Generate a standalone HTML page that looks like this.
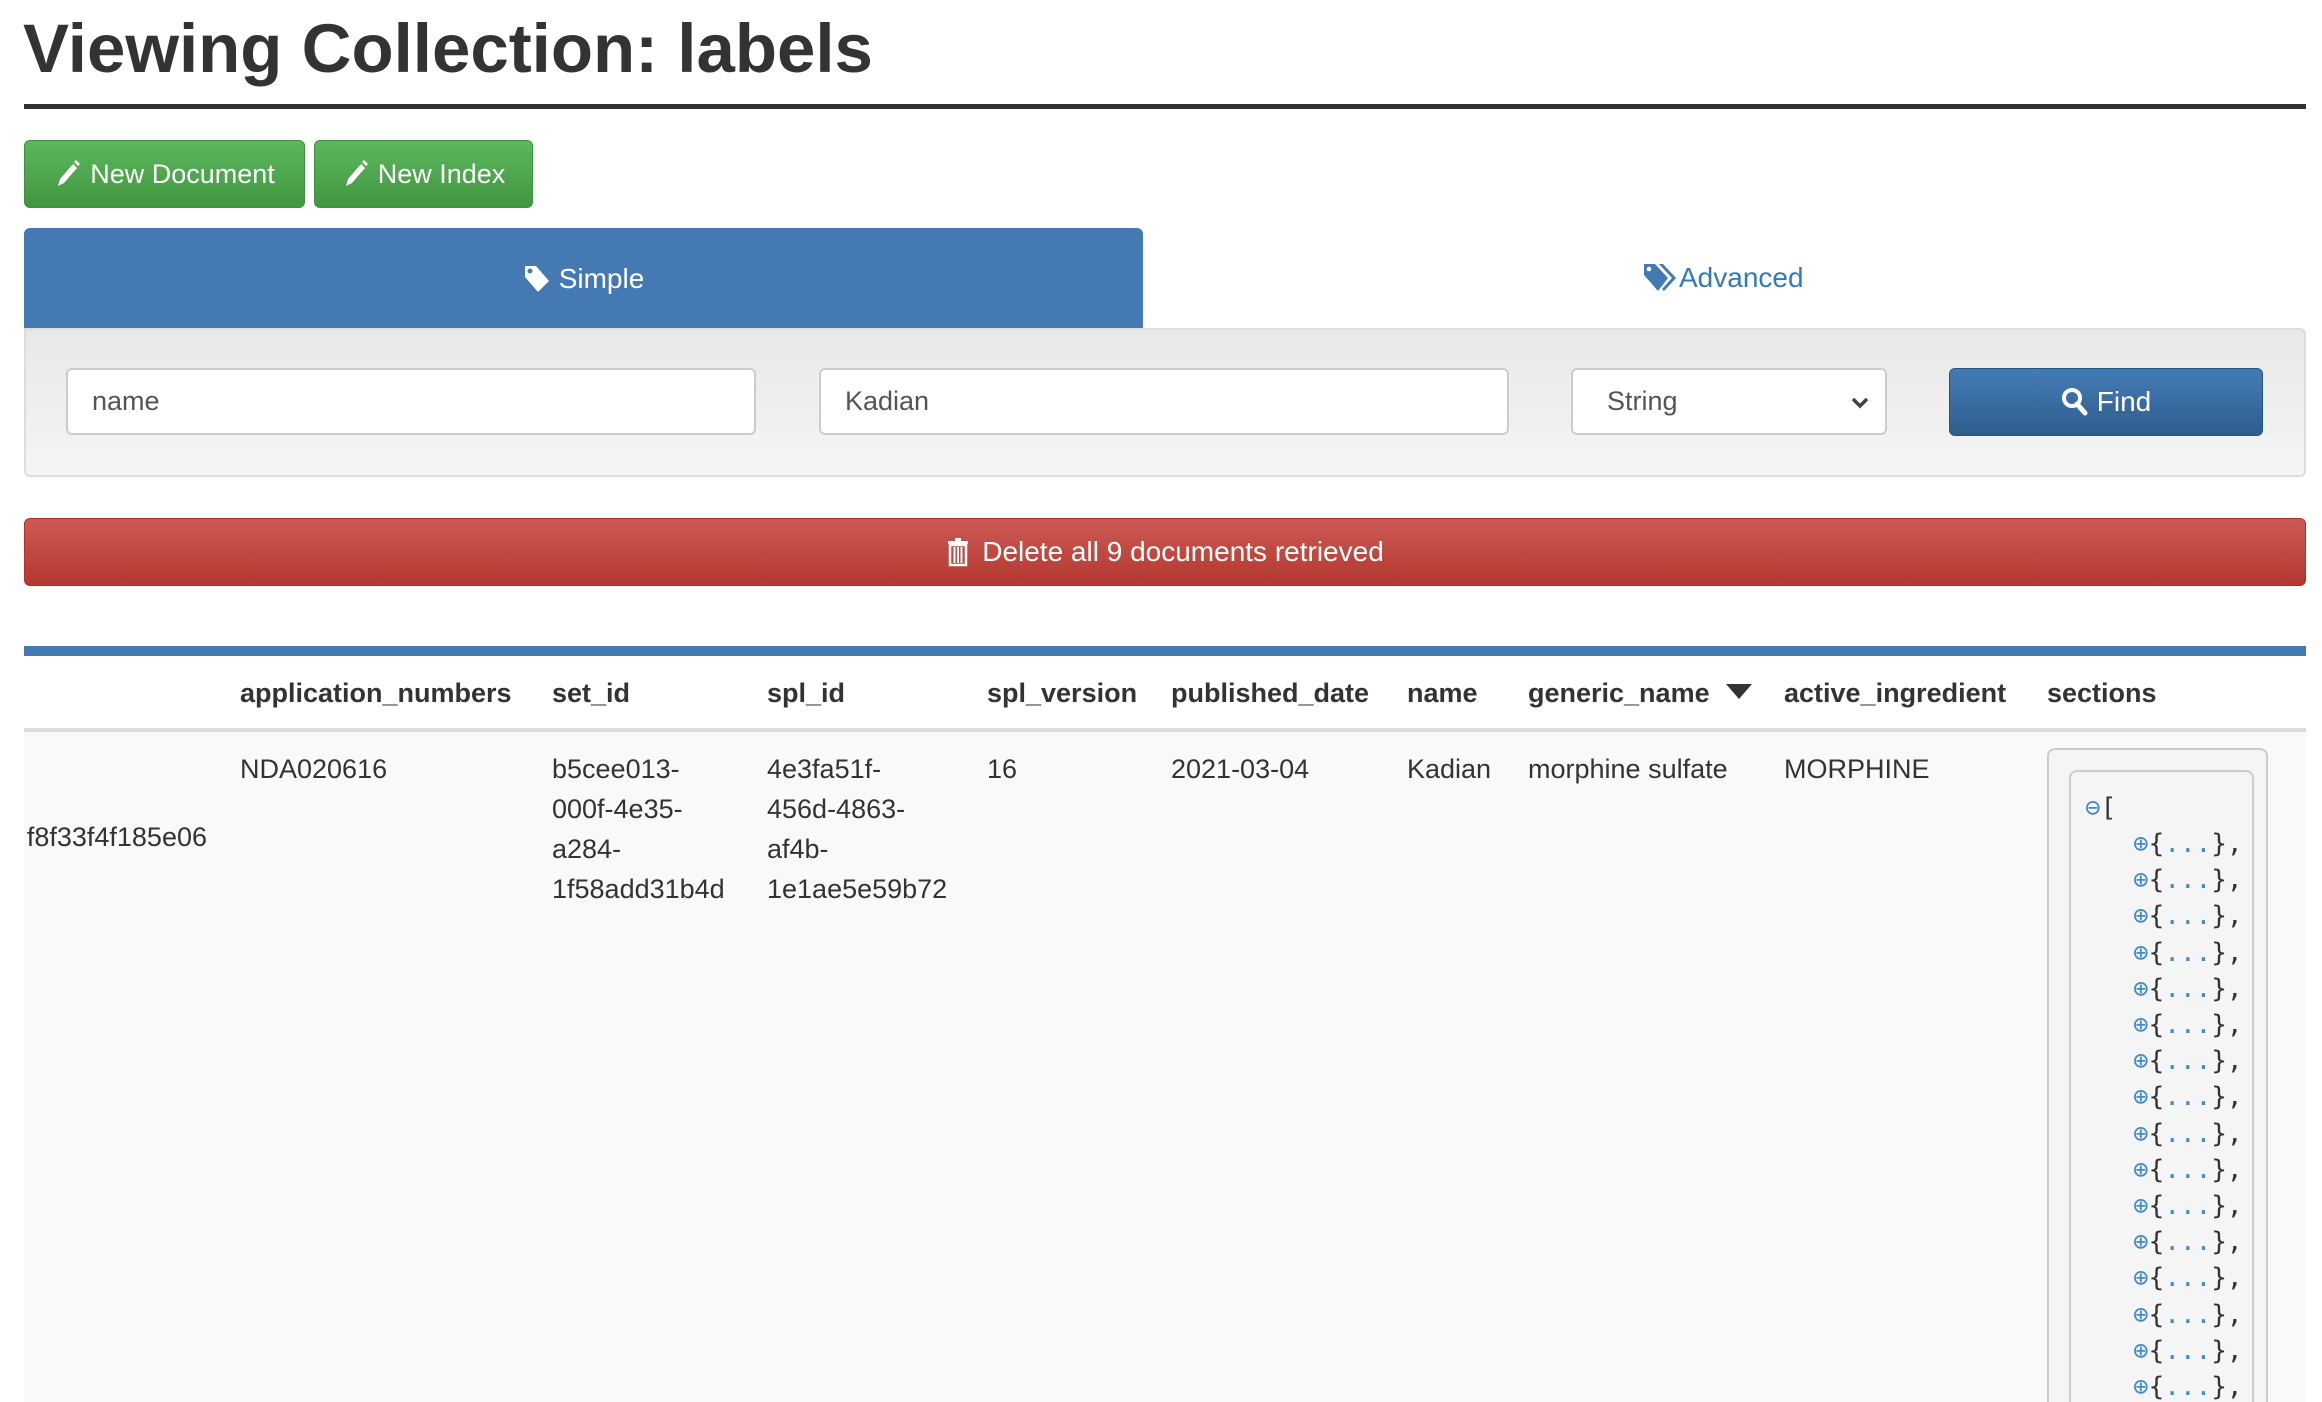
<!DOCTYPE html>
<html style="overflow:hidden;height:1402px"><head><meta charset="utf-8"><style>
*{box-sizing:border-box;margin:0;padding:0}
body{width:2322px;height:1402px;overflow:hidden;background:#fff;font-family:"Liberation Sans",Arial,sans-serif;color:#333;position:relative}
.a{position:absolute}
.t{position:absolute;white-space:nowrap;font-size:27px;line-height:40px}
.btn{position:absolute;border-radius:6px;color:#fff;font-size:27px;display:flex;align-items:center;justify-content:center}
.inp{position:absolute;background:#fff;border:2px solid #ccc;border-radius:6px;font-size:27px;color:#555;display:flex;align-items:center;padding-left:24px}
.h{font-weight:bold}
.mono{font-family:"DejaVu Sans Mono","Liberation Mono",monospace;font-size:26px;line-height:36.2px;position:absolute;white-space:pre;color:#333}
.b{color:#428bca}
</style></head><body>
<div class="a" style="left:23px;top:13px;font-size:69px;line-height:71px;font-weight:bold;white-space:nowrap;color:#333">Viewing Collection: labels</div>
<div class="a" style="left:24px;top:104px;width:2282px;height:5px;background:#333"></div>

<div class="btn" style="left:24px;top:140px;width:281px;height:68px;background:linear-gradient(#5cb85c,#419641);border:1px solid #3e8f3e">
<svg width="26" height="28" viewBox="0 0 26 28" style="margin-right:10px"><path d="M4 26 L6 19 L19 4 L23 8 L10 23 Z" fill="#fff"/><path d="M20 2 L22 0 L26 4 L24 6Z" fill="#fff"/></svg>New Document</div>
<div class="btn" style="left:314px;top:140px;width:219px;height:68px;background:linear-gradient(#5cb85c,#419641);border:1px solid #3e8f3e">
<svg width="26" height="28" viewBox="0 0 26 28" style="margin-right:10px"><path d="M4 26 L6 19 L19 4 L23 8 L10 23 Z" fill="#fff"/><path d="M20 2 L22 0 L26 4 L24 6Z" fill="#fff"/></svg>New Index</div>

<div class="btn" style="left:24px;top:228px;width:1119px;height:101px;background:#4479b3;border-radius:6px 6px 0 0;font-size:28px">
<svg width="28" height="30" viewBox="0 0 28 30" style="margin-right:8px"><path d="M2 2 L13 2 L26 17 L15 28 L2 13 Z" fill="#fff"/><circle cx="7" cy="7" r="2.5" fill="#4479b3"/></svg>Simple</div>
<div class="a" style="left:1643px;top:258px;height:40px;display:flex;align-items:center;color:#337ab7;font-size:28px">
<svg width="36" height="30" viewBox="0 0 36 30"><path d="M1 1 L12 1 L25 15 L15 28 L1 12 Z" fill="#4479b3"/><path d="M16 1 L20 1 L33 15 L21 28 L19 26 L29 15 Z" fill="#4479b3"/><circle cx="6" cy="6" r="2.3" fill="#fff"/></svg>Advanced</div>

<div class="a" style="left:24px;top:328px;width:2282px;height:149px;background:linear-gradient(#e8e8e8,#f5f5f5);border:2px solid #ddd;border-radius:0 6px 6px 6px"></div>
<div class="inp" style="left:66px;top:368px;width:690px;height:67px">name</div>
<div class="inp" style="left:819px;top:368px;width:690px;height:67px">Kadian</div>
<div class="inp" style="left:1571px;top:368px;width:316px;height:67px;padding-left:34px">String
<svg class="a" style="right:16px;top:26px" width="18" height="14" viewBox="0 0 18 14"><path d="M2 3 L9 10 L16 3" stroke="#444" stroke-width="3.5" fill="none"/></svg></div>
<div class="btn" style="left:1949px;top:368px;width:314px;height:68px;background:linear-gradient(#447bb5,#2f5d8e);border:1px solid #245580;font-size:28px">
<svg width="28" height="30" viewBox="0 0 28 30" style="margin-right:8px"><circle cx="11" cy="11" r="8" stroke="#fff" stroke-width="4" fill="none"/><path d="M16 17 L24 26" stroke="#fff" stroke-width="5" stroke-linecap="round"/></svg>Find</div>

<div class="btn" style="left:24px;top:518px;width:2282px;height:68px;background:linear-gradient(#cc5a55,#b3382f);border:1px solid #b92c28;font-size:28px">
<svg width="24" height="30" viewBox="0 0 24 30" style="margin-right:12px"><path d="M9 1 H15 V4 H9Z M2 4 H22 V7 H2Z" fill="#fff"/><path d="M4 8 H20 V28 H4 Z" fill="none" stroke="#fff" stroke-width="2.5"/><path d="M8.5 10 V26 M12 10 V26 M15.5 10 V26" stroke="#fff" stroke-width="2"/></svg>Delete all 9 documents retrieved</div>

<div class="a" style="left:24px;top:646px;width:2282px;height:10px;background:#4479b3"></div>
<div class="a" style="left:24px;top:728px;width:2282px;height:4px;background:#ddd"></div>
<div class="a" style="left:24px;top:732px;width:2282px;height:670px;background:#f9f9f9"></div>

<div class="t h" style="left:240px;top:673px">application_numbers</div>
<div class="t h" style="left:552px;top:673px">set_id</div>
<div class="t h" style="left:767px;top:673px">spl_id</div>
<div class="t h" style="left:987px;top:673px">spl_version</div>
<div class="t h" style="left:1171px;top:673px">published_date</div>
<div class="t h" style="left:1407px;top:673px">name</div>
<div class="t h" style="left:1528px;top:673px">generic_name</div>
<svg class="a" style="left:1726px;top:684px" width="26" height="16" viewBox="0 0 26 16"><path d="M0 0 H26 L13 15Z" fill="#333"/></svg>
<div class="t h" style="left:1784px;top:673px">active_ingredient</div>
<div class="t h" style="left:2047px;top:673px">sections</div>

<div class="a" style="left:24px;top:817px;width:200px;height:40px;overflow:hidden"><div class="t" style="right:17px;top:0">f8f33f4f185e06</div></div>
<div class="t" style="left:240px;top:749px">NDA020616</div>
<div class="t" style="left:552px;top:749px">b5cee013-<br>000f-4e35-<br>a284-<br>1f58add31b4d</div>
<div class="t" style="left:767px;top:749px">4e3fa51f-<br>456d-4863-<br>af4b-<br>1e1ae5e59b72</div>
<div class="t" style="left:987px;top:749px">16</div>
<div class="t" style="left:1171px;top:749px">2021-03-04</div>
<div class="t" style="left:1407px;top:749px">Kadian</div>
<div class="t" style="left:1528px;top:749px">morphine sulfate</div>
<div class="t" style="left:1784px;top:749px">MORPHINE</div>

<div class="a" style="left:2047px;top:748px;width:221px;height:654px;background:#f5f5f5;border:2px solid #ccc;border-bottom:none;border-radius:8px 8px 0 0"></div>
<div class="a" style="left:2069px;top:770px;width:185px;height:632px;background:#f5f5f5;border:2px solid #ccc;border-bottom:none;border-radius:8px 8px 0 0"></div>
<div class="mono" style="left:2085px;top:790px"><span class="b">⊖</span>[</div>
<div class="mono" style="left:2133px;top:826px"><span class="b">⊕</span>{<span class="b">...</span>},
<span class="b">⊕</span>{<span class="b">...</span>},
<span class="b">⊕</span>{<span class="b">...</span>},
<span class="b">⊕</span>{<span class="b">...</span>},
<span class="b">⊕</span>{<span class="b">...</span>},
<span class="b">⊕</span>{<span class="b">...</span>},
<span class="b">⊕</span>{<span class="b">...</span>},
<span class="b">⊕</span>{<span class="b">...</span>},
<span class="b">⊕</span>{<span class="b">...</span>},
<span class="b">⊕</span>{<span class="b">...</span>},
<span class="b">⊕</span>{<span class="b">...</span>},
<span class="b">⊕</span>{<span class="b">...</span>},
<span class="b">⊕</span>{<span class="b">...</span>},
<span class="b">⊕</span>{<span class="b">...</span>},
<span class="b">⊕</span>{<span class="b">...</span>},
<span class="b">⊕</span>{<span class="b">...</span>},</div>
</body></html>
